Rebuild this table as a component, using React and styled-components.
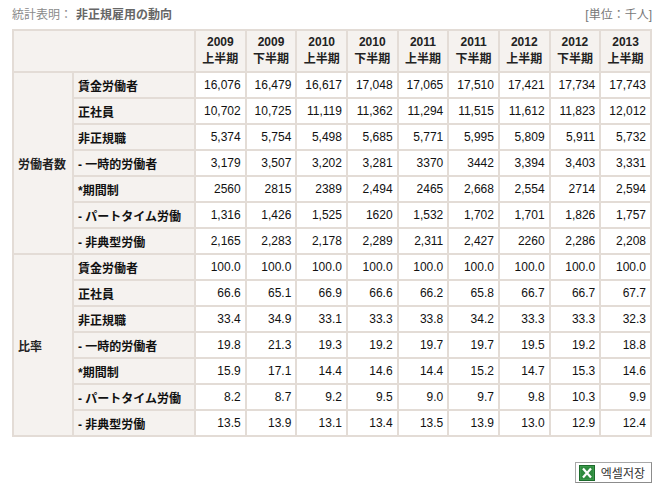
import styled, { createGlobalStyle } from "styled-components";

const GlobalStyle = createGlobalStyle`
  body {
    margin: 0;
    background: #fff;
    font-family: "Liberation Sans", "Noto Sans CJK JP", sans-serif;
  }
`;

const Page = styled.div`
  width: 640px;
  padding: 0 10px 0 12px;
`;

const TitleBar = styled.div`
  height: 29px;
  display: flex;
  align-items: center;
  justify-content: space-between;
  font-size: 12px;
  line-height: 14px;
`;

const Caption = styled.div`
  color: #8a8a8a;

  b {
    color: #666;
    font-weight: bold;
    margin-left: 4px;
  }
`;

const Unit = styled.div`
  color: #777;
`;

const Table = styled.table`
  width: 640px;
  border-collapse: collapse;
  table-layout: fixed;
  font-size: 12px;
  border: 2px solid #e3dcd6;
`;

const Head = styled.th`
  background: #f5f2ef;
  border: 2px solid #e3dcd6;
  height: 40px;
  padding: 0;
  font-weight: bold;
  color: #222;
  line-height: 17px;
  text-align: center;
`;

const Group = styled.th`
  background: #f5f2ef;
  border: 2px solid #e3dcd6;
  text-align: left;
  padding: 0 0 0 4px;
  font-weight: bold;
  color: #222;
`;

const Label = styled.th`
  background: #f5f2ef;
  border: 2px solid #e3dcd6;
  text-align: left;
  padding: 0 0 0 4px;
  height: 24px;
  font-weight: bold;
  color: #111;
  white-space: nowrap;
`;

const Cell = styled.td`
  background: #fff;
  border: 2px solid #e3dcd6;
  text-align: right;
  padding: 0 4px 0 0;
  height: 24px;
  color: #111;
`;

const Footer = styled.div`
  display: flex;
  justify-content: flex-end;
  margin-top: 25px;
`;

const ExcelButton = styled.button`
  display: flex;
  align-items: center;
  gap: 6px;
  height: 21px;
  padding: 0 6px 0 3px;
  background: #fff;
  border: 1px solid #a8a8a8;
  border-right-color: #8c8c8c;
  border-bottom-color: #8c8c8c;
  font-family: "Noto Sans CJK KR", sans-serif;
  font-size: 12px;
  line-height: 14px;
  color: #333;
  cursor: pointer;
`;

const ExcelIcon = () => (
  <svg width="16" height="16" viewBox="0 0 16 16">
    <rect x="0.5" y="0.5" width="15" height="15" fill="#3a9a4a" stroke="#1d6b2c" />
    <rect x="2" y="2" width="12" height="12" fill="#2f8a3f" />
    <path d="M4 3.5 L12 12.5 M12 3.5 L4 12.5" stroke="#fff" strokeWidth="2.2" />
  </svg>
);

const periods = [
  ["2009", "上半期"],
  ["2009", "下半期"],
  ["2010", "上半期"],
  ["2010", "下半期"],
  ["2011", "上半期"],
  ["2011", "下半期"],
  ["2012", "上半期"],
  ["2012", "下半期"],
  ["2013", "上半期"],
];

const groups = [
  {
    name: "労働者数",
    rows: [
      ["賃金労働者", "16,076 16,479 16,617 17,048 17,065 17,510 17,421 17,734 17,743"],
      ["正社員", "10,702 10,725 11,119 11,362 11,294 11,515 11,612 11,823 12,012"],
      ["非正規職", "5,374 5,754 5,498 5,685 5,771 5,995 5,809 5,911 5,732"],
      ["- 一時的労働者", "3,179 3,507 3,202 3,281 3370 3442 3,394 3,403 3,331"],
      ["*期間制", "2560 2815 2389 2,494 2465 2,668 2,554 2714 2,594"],
      ["- パートタイム労働", "1,316 1,426 1,525 1620 1,532 1,702 1,701 1,826 1,757"],
      ["- 非典型労働", "2,165 2,283 2,178 2,289 2,311 2,427 2260 2,286 2,208"],
    ],
  },
  {
    name: "比率",
    rows: [
      ["賃金労働者", "100.0 100.0 100.0 100.0 100.0 100.0 100.0 100.0 100.0"],
      ["正社員", "66.6 65.1 66.9 66.6 66.2 65.8 66.7 66.7 67.7"],
      ["非正規職", "33.4 34.9 33.1 33.3 33.8 34.2 33.3 33.3 32.3"],
      ["- 一時的労働者", "19.8 21.3 19.3 19.2 19.7 19.7 19.5 19.2 18.8"],
      ["*期間制", "15.9 17.1 14.4 14.6 14.4 15.2 14.7 15.3 14.6"],
      ["- パートタイム労働", "8.2 8.7 9.2 9.5 9.0 9.7 9.8 10.3 9.9"],
      ["- 非典型労働", "13.5 13.9 13.1 13.4 13.5 13.9 13.0 12.9 12.4"],
    ],
  },
];

export default function App() {
  return (
    <>
      <GlobalStyle />
      <Page>
        <TitleBar>
          <Caption>
            統計表明：<b>非正規雇用の動向</b>
          </Caption>
          <Unit>[単位：千人]</Unit>
        </TitleBar>
        <Table>
          <colgroup>
            <col style={{ width: 60 }} />
            <col style={{ width: 122 }} />
            {periods.map((_, i) => (
              <col key={i} />
            ))}
          </colgroup>
          <thead>
            <tr>
              <Head colSpan={2} />
              {periods.map(([year, half], i) => (
                <Head key={i}>
                  {year}
                  <br />
                  {half}
                </Head>
              ))}
            </tr>
          </thead>
          <tbody>
            {groups.map((group) =>
              group.rows.map(([label, values], r) => (
                <tr key={group.name + r}>
                  {r === 0 && <Group rowSpan={group.rows.length}>{group.name}</Group>}
                  <Label>{label}</Label>
                  {values.split(" ").map((v, i) => (
                    <Cell key={i}>{v}</Cell>
                  ))}
                </tr>
              ))
            )}
          </tbody>
        </Table>
        <Footer>
          <ExcelButton>
            <ExcelIcon />
            엑셀저장
          </ExcelButton>
        </Footer>
      </Page>
    </>
  );
}
